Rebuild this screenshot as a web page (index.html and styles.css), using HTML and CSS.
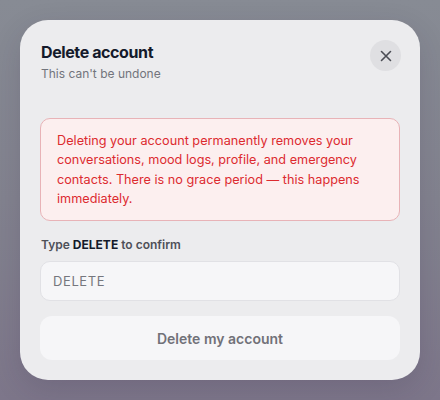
FILE: index.html
```html
<!DOCTYPE html>
<html>
<head>
<meta charset="utf-8">
<link rel="stylesheet" href="styles.css">
</head>
<body>
<div class="backdrop">
  <div class="modal">
    <div class="header">
      <div class="titles">
        <h1 class="title">Delete account</h1>
        <p class="subtitle">This can't be undone</p>
      </div>
      <button class="close" aria-label="Close">
        <svg width="14" height="14" viewBox="0 0 14 14"><path d="M2.5 2.5 L11.5 11.5 M11.5 2.5 L2.5 11.5" stroke="#4b4d55" stroke-width="1.6" stroke-linecap="round"/></svg>
      </button>
    </div>
    <div class="alert">Deleting your account permanently removes your conversations, mood logs, profile, and emergency contacts. There is no grace period — this happens immediately.</div>
    <label class="label">Type <strong>DELETE</strong> to confirm</label>
    <input class="input" type="text" placeholder="DELETE">
    <button class="submit">Delete my account</button>
  </div>
</div>
</body>
</html>
```
FILE: styles.css
```css
* { box-sizing: border-box; }
html, body { margin: 0; padding: 0; }
body {
  font-family: Inter, "Noto Sans", sans-serif;
  width: 440px;
  height: 400px;
  overflow: hidden;
}
.backdrop {
  width: 440px;
  height: 400px;
  background: linear-gradient(180deg, #878b94 0%, #83838f 50%, #7d768a 100%);
  padding: 20px;
}
.modal {
  background: #ececee;
  border-radius: 28px;
  height: 360px;
  padding: 20px 20px 20px 20px;
  display: flex;
  flex-direction: column;
  box-shadow: 0 10px 30px rgba(40, 30, 60, 0.15);
}
.header {
  display: flex;
  justify-content: space-between;
  align-items: flex-start;
  height: 78px;
}
.titles { padding-top: 2px; padding-left: 1px; }
.title {
  margin: 0;
  font-size: 16px;
  font-weight: 700;
  color: #141a2b;
  line-height: 20px;
  letter-spacing: -0.4px;
}
.subtitle {
  margin: 4px 0 0;
  font-size: 12px;
  color: #72747c;
  line-height: 16px;
}
.close {
  width: 31px;
  height: 31px;
  border-radius: 50%;
  border: none;
  background: #dfdfe2;
  display: flex;
  align-items: center;
  justify-content: center;
  padding: 0;
  margin-right: -1px;
}
.alert {
  border: 1px solid #e8b3b7;
  background: #fcefef;
  border-radius: 10px;
  padding: 12px 16px 11px;
  color: #dc2b2f;
  font-size: 12.7px;
  line-height: 19.5px;
}
.label {
  margin-top: 16px;
  font-size: 12px;
  font-weight: 600;
  color: #4e5059;
  line-height: 16px;
  padding-left: 1px;
}
.label strong { color: #141a2b; font-weight: 700; }
.input {
  margin-top: 8px;
  height: 41px;
  width: 100%;
  border: 1px solid #e1e1e5;
  background: #f6f6f8;
  border-radius: 10px;
  padding: 0 12px;
  font-family: Inter, "Noto Sans", sans-serif;
  font-size: 13px;
  letter-spacing: 0.6px;
  outline: none;
}
.input::placeholder { color: #75767d; }
.submit {
  margin-top: 15px;
  height: 44px;
  width: 100%;
  border: none;
  background: #f6f6f8;
  border-radius: 12px;
  font-family: Inter, "Noto Sans", sans-serif;
  font-size: 14px;
  font-weight: 600;
  color: #717178;
}
```
